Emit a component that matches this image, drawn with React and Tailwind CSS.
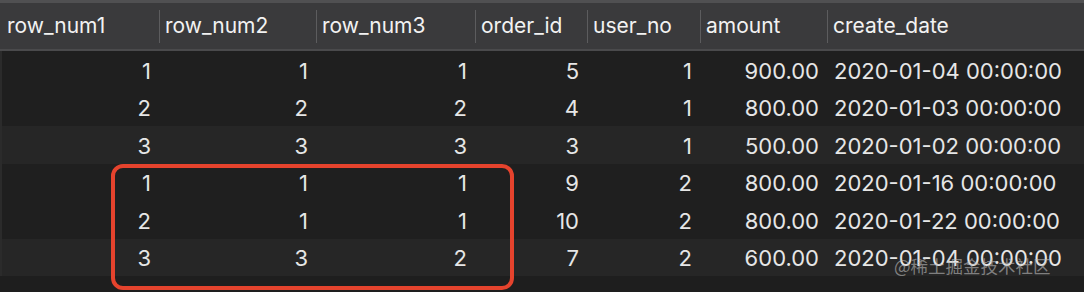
import React from "react";

const columns = ["row_num1", "row_num2", "row_num3", "order_id", "user_no", "amount", "create_date"];

const rows = [
  ["1", "1", "1", "5", "1", "900.00", "2020-01-04 00:00:00"],
  ["2", "2", "2", "4", "1", "800.00", "2020-01-03 00:00:00"],
  ["3", "3", "3", "3", "1", "500.00", "2020-01-02 00:00:00"],
  ["1", "1", "1", "9", "2", "800.00", "2020-01-16 00:00:00"],
  ["2", "1", "1", "10", "2", "800.00", "2020-01-22 00:00:00"],
  ["3", "3", "2", "7", "2", "600.00", "2020-01-04 00:00:00"],
];

const grid = "grid grid-cols-[157px_157px_159px_112px_113px_127px_1fr]";

export default function App() {
  return (
    <div
      className="relative h-[292px] w-[1084px] overflow-hidden bg-[#1e1e1e] text-[21px]"
      style={{ fontFamily: "Inter, 'Noto Sans', sans-serif" }}
    >
      {/* header */}
      <div className="border-t-[3px] border-b-2 border-t-[#505052] border-b-[#4a4a4c] bg-[#3a3a3c]">
        <div className={`${grid} h-[46px] pl-[2px]`}>
          {columns.map((c, i) => (
            <div key={c} className="flex items-center">
              {i > 0 && <div className="h-[33px] w-px bg-[#5c5c5e]" />}
              <span className="pl-[5px] text-[#f2f2f2]">{c}</span>
            </div>
          ))}
        </div>
      </div>

      {/* body */}
      <div className="border-l-2 border-[#2b2b2b]">
        {rows.map((r, ri) => (
          <div
            key={ri}
            className={`${grid} h-[37.5px] text-[22px] ${ri === 2 || ri === 5 ? "bg-[#262626]" : "bg-[#1f1f1f]"}`}
          >
            {r.map((v, ci) => (
              <div
                key={ci}
                className={`flex items-center pt-[3px] text-[#e6e6e6] ${
                  ci === 6 ? "justify-start pl-[7px]" : "justify-end pr-[8px]"
                }`}
              >
                {v}
              </div>
            ))}
          </div>
        ))}
      </div>

      {/* highlight box */}
      <div className="absolute left-[111px] top-[164px] h-[126px] w-[403px] rounded-[12px] border-[4px] border-[#e5432d]" />

      {/* watermark */}
      <div
        className="absolute left-[894px] top-[253px] text-[17.5px] text-[#bdbdbd]/60"
        style={{ fontFamily: "'Noto Sans CJK SC', sans-serif" }}
      >
        @稀土掘金技术社区
      </div>
    </div>
  );
}
